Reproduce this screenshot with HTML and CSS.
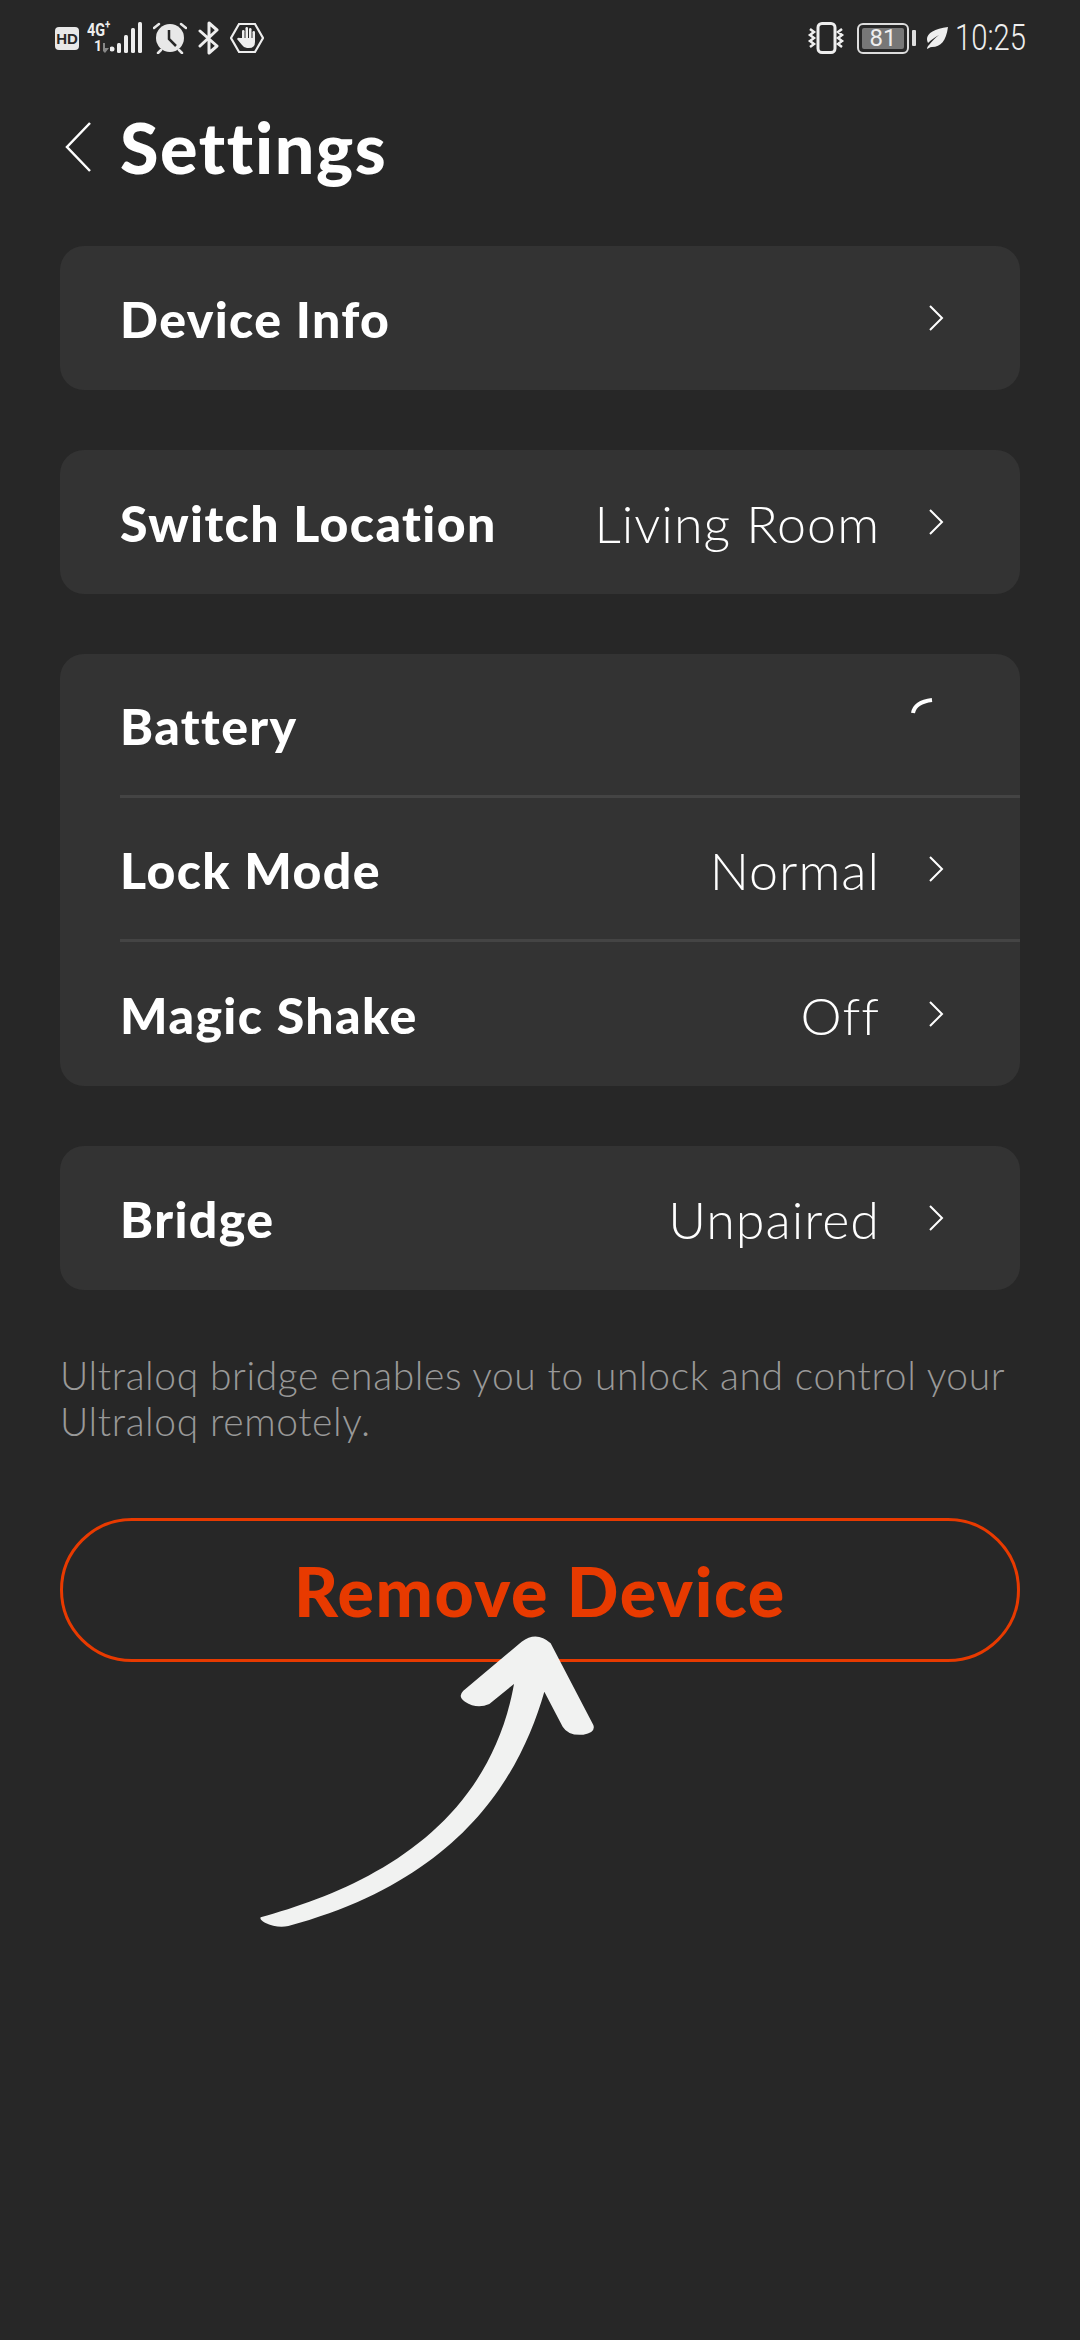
FILE: index.html
```html
<!DOCTYPE html>
<html lang="en">
<head>
  <meta charset="UTF-8">
  <meta name="viewport" content="width=device-width, initial-scale=1.0">
  <title>Settings</title>
  <link rel="stylesheet" href="styles.css">
</head>
<body>
  <div class="status">
    <div class="status-group">
      <span class="hd">HD</span>
      <div class="net">
        <span class="net-4g">4G<sup>+</sup></span>
        <span class="net-1">1<svg width="6" height="10" viewBox="0 0 6 10"><path d="M0 0h2v5h4L2 10 0 8z" fill="#888"/></svg></span>
      </div>
      <svg class="signal" width="32" height="32" viewBox="0 0 32 32" fill="#eee">
        <circle cx="2" cy="27" r="2.5"/>
        <rect x="7" y="21" width="4" height="10" rx="1.5"/>
        <rect x="14" y="13" width="4" height="18" rx="1.5"/>
        <rect x="21" y="6" width="4" height="25" rx="1.5"/>
        <rect x="28" y="0" width="4" height="31" rx="1.5"/>
      </svg>
      <svg class="alarm" width="34" height="32" viewBox="0 0 34 32">
        <circle cx="17" cy="16" r="14" fill="#e8e8e8"/>
        <path d="M16 8v9l7 7" fill="none" stroke="#272727" stroke-width="2.5"/>
        <path d="M1 6l5-4M33 6l-5-4M5 31l3-3M29 31l-3-3" fill="none" stroke="#e8e8e8" stroke-width="2.5" stroke-linecap="round"/>
      </svg>
      <svg class="bt" width="22" height="34" viewBox="0 0 22 34" fill="none" stroke="#eee" stroke-width="3" stroke-linejoin="round" stroke-linecap="round">
        <path d="M2 10l17 15-8 7V2l8 7L2 25"/>
      </svg>
      <svg class="hand" width="34" height="32" viewBox="0 0 34 32">
        <path d="M9 2h16l8 14-8 14H9L1 16z" fill="none" stroke="#eee" stroke-width="2.2"/>
        <g fill="#eee">
          <rect x="12" y="8" width="2.5" height="11" rx="1.2"/>
          <rect x="15.5" y="5" width="2.5" height="14" rx="1.2"/>
          <rect x="19" y="6" width="2.5" height="13" rx="1.2"/>
          <rect x="22.5" y="9" width="2.5" height="10" rx="1.2"/>
          <path d="M12 16h13v4q0 6-6 6h-2q-3 0-5-3l-5-6q1-2 3-1z"/>
        </g>
      </svg>
    </div>
    <div class="status-group">
      <svg class="vibrate" width="38" height="32" viewBox="0 0 38 32">
        <rect x="11" y="1.5" width="17" height="29" rx="4" fill="none" stroke="#eee" stroke-width="3"/>
        <path d="M3 7l4 3-4 3 4 3-4 3 4 3-4 3M35 7l-4 3 4 3-4 3 4 3-4 3 4 3" fill="none" stroke="#eee" stroke-width="2.5"/>
      </svg>
      <div class="battery"><span class="battery-num">81</span></div>
      <span class="battery-nub"></span>
      <svg class="leaf" width="22" height="22" viewBox="0 0 22 22">
        <path d="M22 0C20 14 15 20 6 20q-2 0-3 1l-2 1c0-2 1-3 2-4C6 14 9 11 13 8 9 10 5 13 2 16-2 8 6 2 22 0z" fill="#eee"/>
      </svg>
      <span class="time">10:25</span>
    </div>
  </div>

  <div class="header">
    <svg class="back" width="28" height="52" viewBox="0 0 28 52">
      <path d="M26 2L3 26l23 24" fill="none" stroke="#fff" stroke-width="2.5"/>
    </svg>
    <h1>Settings</h1>
  </div>

  <div class="content">
    <div class="card">
      <div class="row">
        <span class="label">Device Info</span>
        <svg class="chev" width="16" height="26" viewBox="0 0 16 26"><path d="M2 1l12 12L2 25" fill="none" stroke="#fff" stroke-width="2"/></svg>
      </div>
    </div>

    <div class="card">
      <div class="row">
        <span class="label">Switch Location</span>
        <span class="value">Living Room</span>
        <svg class="chev" width="16" height="26" viewBox="0 0 16 26"><path d="M2 1l12 12L2 25" fill="none" stroke="#fff" stroke-width="2"/></svg>
      </div>
    </div>

    <div class="card">
      <div class="row divided">
        <span class="label">Battery</span>
        <svg class="spinner" width="22" height="16" viewBox="0 0 22 16"><path d="M2 15Q4 4 21 2" fill="none" stroke="#fff" stroke-width="4"/></svg>
      </div>
      <div class="row divided">
        <span class="label">Lock Mode</span>
        <span class="value">Normal</span>
        <svg class="chev" width="16" height="26" viewBox="0 0 16 26"><path d="M2 1l12 12L2 25" fill="none" stroke="#fff" stroke-width="2"/></svg>
      </div>
      <div class="row">
        <span class="label">Magic Shake</span>
        <span class="value">Off</span>
        <svg class="chev" width="16" height="26" viewBox="0 0 16 26"><path d="M2 1l12 12L2 25" fill="none" stroke="#fff" stroke-width="2"/></svg>
      </div>
    </div>

    <div class="card">
      <div class="row">
        <span class="label">Bridge</span>
        <span class="value">Unpaired</span>
        <svg class="chev" width="16" height="26" viewBox="0 0 16 26"><path d="M2 1l12 12L2 25" fill="none" stroke="#fff" stroke-width="2"/></svg>
      </div>
    </div>

    <p class="note">Ultraloq bridge enables you to unlock and control your Ultraloq remotely.</p>

    <button class="remove" type="button">Remove Device</button>
  </div>

  <svg class="arrow" width="420" height="460" viewBox="0 0 1260 1380">
    <path d="M122 1252C400 1175 800 1010 882 552L808 612Q770 628 735 605Q712 590 730 572L905 425Q950 392 992 430L1120 675Q1128 697 1090 704Q1045 708 1028 680L973 575C900 830 720 1140 205 1278Q170 1285 135 1268Q118 1258 122 1252Z" fill="#f1f2f1"/>
  </svg>
</body>
</html>
```

FILE: styles.css
```css
* {
  box-sizing: border-box;
}
body {
  position: relative;
  width: 1080px;
  height: 2340px;
  margin: 0;
  overflow: hidden;
  background: #272727;
  color: #fff;
  font-family: Lato, "Noto Sans", sans-serif;
}

/* status bar */
.status {
  display: flex;
  justify-content: space-between;
  align-items: center;
  height: 72px;
  padding: 4px 57px 0 55px;
  color: #eee;
}
.status-group {
  display: flex;
  align-items: center;
}
.hd {
  width: 24px;
  height: 23px;
  background: #e8e8e8;
  border-radius: 4px;
  color: #272727;
  font: bold 15px/23px "Liberation Sans", sans-serif;
  text-align: center;
}
.net {
  width: 31px;
  height: 32px;
  margin-left: 8px;
  font-family: Roboto, sans-serif;
  font-weight: 700;
  line-height: 15px;
  white-space: nowrap;
}
.net-4g {
  display: block;
  font-size: 18px;
  transform: scaleX(.8);
  transform-origin: left;
}
.net-4g sup {
  font-size: 12px;
  line-height: 0;
}
.net-1 {
  display: flex;
  align-items: flex-end;
  gap: 1px;
  margin: 3px 0 0 7px;
  font-size: 14px;
  line-height: 13px;
}
.signal {
  margin-left: -8px;
}
.alarm {
  margin-left: 11px;
}
.bt {
  margin-left: 11px;
}
.hand {
  margin-left: 10px;
}
.battery {
  width: 52px;
  height: 31px;
  margin-left: 12px;
  padding: 3px;
  border: 2.5px solid #ddd;
  border-radius: 6px;
}
.battery-num {
  display: block;
  height: 100%;
  background: #777;
  border-radius: 2px;
  font: 24px/21px Roboto, sans-serif;
  text-align: center;
}
.battery-nub {
  width: 4px;
  height: 16px;
  margin-left: 3px;
  background: #ddd;
  border-radius: 1px;
}
.leaf {
  margin-left: 10px;
}
.time {
  width: 68px;
  margin-left: 7px;
  font: 300 37px/40px Roboto, sans-serif;
  white-space: nowrap;
  transform: scaleX(.79);
  transform-origin: left;
}

/* title */
.header {
  display: flex;
  align-items: center;
  height: 150px;
  padding-left: 64px;
}
.back {
  margin-right: 28px;
}
h1 {
  margin: 0;
  font-size: 70px;
  font-weight: 900;
  letter-spacing: 1.6px;
}

.content {
  padding: 24px 60px 0;
}
.card {
  margin-bottom: 60px;
  background: #333;
  border-radius: 24px;
}
.row {
  display: flex;
  align-items: center;
  height: 144px;
  margin-left: 60px;
  padding-right: 76px;
}
.divided {
  border-bottom: 3px solid #444;
}
.label {
  flex: 1;
  padding-top: 2px;
  font-size: 50px;
  font-weight: 900;
  letter-spacing: 1.4px;
}
.value {
  padding-top: 2px;
  font-size: 52px;
  font-weight: 300;
  letter-spacing: 1px;
}
.chev {
  margin-left: 48px;
}
.spinner {
  margin: -38px 11px 0 0;
}

.note {
  margin: -60px 0 0;
  padding-top: 62px;
  color: #999;
  font-size: 39px;
  font-weight: 300;
  letter-spacing: .6px;
  line-height: 46px;
}
.remove {
  display: block;
  width: 100%;
  height: 144px;
  margin-top: 74px;
  background: none;
  border: 3px solid #e83a00;
  border-radius: 72px;
  color: #e83a00;
  font-family: Lato, "Noto Sans", sans-serif;
  font-size: 68px;
  font-weight: 900;
  letter-spacing: 1.6px;
}

/* hand drawn arrow over the button */
.arrow {
  position: absolute;
  left: 220px;
  top: 1500px;
}
```
